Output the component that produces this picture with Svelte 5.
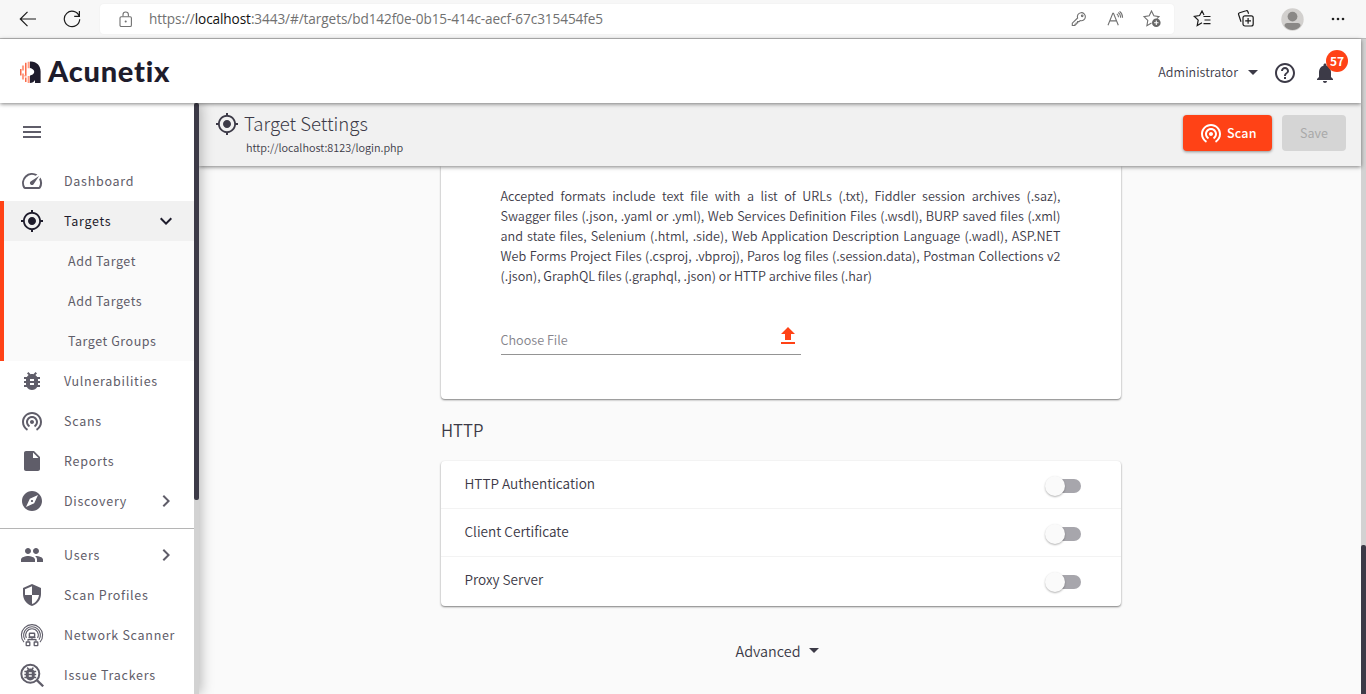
<script>
  const icons = {
    menu: 'M3 18h18v-2H3v2zm0-5h18v-2H3v2zm0-7v2h18V6H3z',
    gauge: 'M20.38 8.57l-1.23 1.85a8 8 0 0 1-.22 7.58H5.07A8 8 0 0 1 15.58 6.85l1.85-1.23A10 10 0 0 0 3.35 19a2 2 0 0 0 1.72 1h13.85a2 2 0 0 0 1.74-1 10 10 0 0 0-.27-10.44zm-9.79 6.84a2 2 0 0 0 2.83 0l5.66-8.49-8.49 5.66a2 2 0 0 0 0 2.83z',
    target: 'M12 8c-2.21 0-4 1.79-4 4s1.79 4 4 4 4-1.79 4-4-1.79-4-4-4zm8.94 3c-.46-4.17-3.77-7.48-7.94-7.94V1h-2v2.06C6.83 3.52 3.52 6.83 3.06 11H1v2h2.06c.46 4.17 3.77 7.48 7.94 7.94V23h2v-2.06c4.17-.46 7.48-3.77 7.94-7.94H23v-2h-2.06zM12 19.2c-3.98 0-7.2-3.22-7.2-7.2s3.22-7.2 7.2-7.2 7.2 3.22 7.2 7.2-3.22 7.2-7.2 7.2z',
    bug: 'M20 8h-2.81c-.45-.78-1.07-1.45-1.82-1.96L17 4.41 15.59 3l-2.17 2.17C12.96 5.06 12.49 5 12 5c-.49 0-.96.06-1.41.17L8.41 3 7 4.41l1.62 1.63C7.88 6.55 7.26 7.22 6.81 8H4v2h2.09c-.05.33-.09.66-.09 1v1H4v2h2v1c0 .34.04.67.09 1H4v2h2.81c1.04 1.79 2.97 3 5.19 3s4.15-1.21 5.19-3H20v-2h-2.09c.05-.33.09-.66.09-1v-1h2v-2h-2v-1c0-.34-.04-.67-.09-1H20V8zm-6 8h-4v-2h4v2zm0-4h-4v-2h4v2z',
    scan: 'M12 11c-1.1 0-2 .9-2 2s.9 2 2 2 2-.9 2-2-.9-2-2-2zm6 2c0-3.31-2.69-6-6-6s-6 2.69-6 6c0 2.22 1.21 4.15 3 5.19l1-1.74c-1.19-.7-2-1.97-2-3.45 0-2.21 1.79-4 4-4s4 1.79 4 4c0 1.48-.81 2.75-2 3.45l1 1.74c1.79-1.04 3-2.97 3-5.19zM12 3C6.48 3 2 7.48 2 13c0 3.7 2.01 6.92 4.99 8.65l1-1.73C5.61 18.53 4 15.96 4 13c0-4.42 3.58-8 8-8s8 3.58 8 8c0 2.96-1.61 5.53-4 6.92l1 1.73c2.99-1.73 5-4.95 5-8.65 0-5.52-4.48-10-10-10z',
    file: 'M6 2c-1.1 0-1.99.9-1.99 2L4 20c0 1.1.89 2 1.99 2H18c1.1 0 2-.9 2-2V8l-6-6H6zm7 7V3.5L18.5 9H13z',
    compass: 'M12 10.9c-.61 0-1.1.49-1.1 1.1s.49 1.1 1.1 1.1c.61 0 1.1-.49 1.1-1.1s-.49-1.1-1.1-1.1zM12 2C6.48 2 2 6.48 2 12s4.48 10 10 10 10-4.48 10-10S17.52 2 12 2zm2.19 12.19L6 18l3.81-8.19L18 6l-3.81 8.19z',
    people: 'M16 11c1.66 0 2.99-1.34 2.99-3S17.66 5 16 5c-1.66 0-3 1.34-3 3s1.34 3 3 3zm-8 0c1.66 0 2.99-1.34 2.99-3S9.66 5 8 5C6.34 5 5 6.34 5 8s1.34 3 3 3zm0 2c-2.33 0-7 1.17-7 3.5V19h14v-2.5c0-2.33-4.67-3.5-7-3.5zm8 0c-.29 0-.62.02-.97.05 1.16.84 1.97 1.97 1.97 3.45V19h6v-2.5c0-2.33-4.67-3.5-7-3.5z',
    shield: 'M12 1L3 5v6c0 5.55 3.84 10.74 9 12 5.16-1.26 9-6.45 9-12V5l-9-4zm0 10.99h7c-.53 4.12-3.28 7.79-7 8.94V12H5V6.3l7-3.11v8.8z',
    down: 'M16.59 8.59L12 13.17 7.41 8.59 6 10l6 6 6-6z',
    right: 'M10 6L8.59 7.41 13.17 12l-4.58 4.59L10 18l6-6z',
    help: 'M11 18h2v-2h-2v2zm1-16C6.48 2 2 6.48 2 12s4.48 10 10 10 10-4.48 10-10S17.52 2 12 2zm0 18c-4.41 0-8-3.59-8-8s3.59-8 8-8 8 3.59 8 8-3.59 8-8 8zm0-14c-2.21 0-4 1.79-4 4h2c0-1.1.9-2 2-2s2 .9 2 2c0 2-3 1.75-3 5h2c0-2.25 3-2.5 3-5 0-2.21-1.79-4-4-4z',
    bell: 'M12 22c1.1 0 2-.9 2-2h-4c0 1.1.89 2 2 2zm6-6v-5c0-3.07-1.64-5.64-4.5-6.32V4c0-.83-.67-1.5-1.5-1.5s-1.5.67-1.5 1.5v.68C7.63 5.36 6 7.92 6 11v5l-2 2v1h16v-1l-2-2z',
    upload: 'M5 20h14v-2H5v2zm0-10h4v6h6v-6h4l-7-7-7 7z'
  };

  const mainNav = [
    { label: 'Dashboard', icon: 'gauge' },
    { label: 'Targets', icon: 'target', arrow: 'down', active: true, children: ['Add Target', 'Add Targets', 'Target Groups'] },
    { label: 'Vulnerabilities', icon: 'bug' },
    { label: 'Scans', icon: 'scan' },
    { label: 'Reports', icon: 'file' },
    { label: 'Discovery', icon: 'compass', arrow: 'right' }
  ];
  const adminNav = [
    { label: 'Users', icon: 'people', arrow: 'right' },
    { label: 'Scan Profiles', icon: 'shield' },
    { label: 'Network Scanner', icon: 'network' },
    { label: 'Issue Trackers', icon: 'tracker' }
  ];
  const httpOptions = ['HTTP Authentication', 'Client Certificate', 'Proxy Server'];
</script>

{#snippet icon(name)}
  {#if name === 'network'}
    <svg class="icon" viewBox="0 0 24 24" fill="none" stroke="currentColor" stroke-width="1.1">
      <path d="M4 19.2A10.6 10.6 0 1 1 20 19.2" />
      <path d="M5 16.8A8.4 8.4 0 1 1 19 16.8" />
      <path d="M6.4 14.9A6.3 6.3 0 1 1 17.6 14.9" />
      <rect x="9.4" y="10.2" width="5.2" height="3.8" rx=".5" stroke-width="1.4" />
      <path d="M12 14v2.8M8 18.5v-1.9h8v1.9M8.5 14.6h7" />
      <rect x="6.2" y="19" width="3.6" height="3.6" rx=".4" stroke-width="1.3" />
      <rect x="14.2" y="19" width="3.6" height="3.6" rx=".4" stroke-width="1.3" />
    </svg>
  {:else if name === 'tracker'}
    <svg class="icon" viewBox="0 0 24 24">
      <circle cx="10.3" cy="10.8" r="9" fill="none" stroke="currentColor" stroke-width="2" />
      <path d="M16.8 17.2l6.4 6.1" stroke="currentColor" stroke-width="2.3" />
      <g transform="translate(1.4 1.9) scale(.74)"><path d={icons.bug} fill="currentColor" /></g>
    </svg>
  {:else}
    <svg class="icon" viewBox="0 0 24 24"><path d={icons[name]} fill="currentColor" /></svg>
  {/if}
{/snippet}

{#snippet navItem(item)}
  <div class="group" class:active={item.active}>
    <a class="nav-row">
      {@render icon(item.icon)}
      <span class="nav-label">{item.label}</span>
      {#if item.arrow}{@render icon(item.arrow)}{/if}
    </a>
    {#each item.children ?? [] as child}
      <a class="sub-row">{child}</a>
    {/each}
  </div>
{/snippet}

<div class="window">
  <div class="toolbar">
    <svg class="back" width="18" height="18" viewBox="0 0 18 18"><path d="M17 9H1.500M8.500 1.800L1.300 9l7.200 7.200" /></svg>
    <svg class="reload" width="18" height="18" viewBox="0 0 18 18"><path d="M16.2 6.2A7.700 7.700 0 1 0 16.700 9.200M16.400 1v5.300h-5.200" /></svg>
    <div class="address">
      <svg class="lock" width="14" height="17" viewBox="0 0 14 17"><rect x="1" y="5.700" width="11.400" height="9.800" rx="1.300" /><path d="M4 5.500V3.700a2.700 2.700 0 0 1 5.400 0v1.800" /><circle cx="6.700" cy="10.500" r=".5" /></svg>
      <span class="url">https://<b>localhost</b>:3443/#/targets/bd142f0e-0b15-414c-aecf-67c315454fe5</span>
      <svg class="key" width="16" height="16" viewBox="0 0 16 16"><path d="M6.600 7A4 4 0 1 1 9.200 9.500L8 10.600H6.600V12H5.200v1.300H4v1.200H1.300v-2.300z" /><circle cx="11.200" cy="4.800" r=".8" /></svg>
      <svg class="read" width="17" height="16" viewBox="0 0 17 16"><path d="M1 14.300L5.800 2.300h.7l4.800 12M2.800 9.900h6.700M9.800 2.900a4 4 0 0 1 1.700 3.300M11.300 1.500a6 6 0 0 1 2.300 5.300M12.600.4a7.600 7.600 0 0 1 2.900 6.400" /></svg>
      <svg class="star" width="20" height="18" viewBox="0 0 20 18"><path d="M9.500 13.100l-4.600 2.600.9-5.300L2 6.600l5.200-.8L9.500 1l2.400 4.800 5.100.8-2.100 2.100" /><circle cx="14.300" cy="12.700" r="4.300" class="plus-bg" /><path d="M14.300 10.500v4.400M12.100 12.700h4.400" class="plus" /></svg>
    </div>
    <svg class="tool t1" width="18" height="18" viewBox="0 0 18 18"><path d="M9 12.800L4.200 15.600l1-5.500L1.300 6.300l5.300-.8L9 1l2 4.100M10.500 6.500h7M11.500 10h6M10.500 13.600h7" /></svg>
    <svg class="tool t2" width="18" height="18" viewBox="0 0 18 18"><rect x="6" y="5.800" width="10.200" height="10.200" rx="2" /><path d="M11.100 8v5.800M8.200 10.900H14M4 11.800L1.600 4.500c-.3-.9.1-1.500 1-1.800l6.500-1.900c.9-.3 1.500.1 1.800.9l.7 2.100" /></svg>
    <svg class="avatar" width="23" height="23" viewBox="0 0 23 23"><circle cx="11.500" cy="11.500" r="11.200" fill="#d2d0ce" /><circle cx="11.500" cy="8.600" r="4.900" fill="#8a8886" /><path d="M3.500 17.900c0-2 1-2.900 2.900-2.900h10.200c1.900 0 2.900.9 2.900 2.900-2 2.600-4.800 4-8 4s-6-1.400-8-4z" fill="#8a8886" /></svg>
    <svg class="dots" width="14" height="4" viewBox="0 0 14 4"><circle cx="2" cy="2" r="1.300" /><circle cx="7" cy="2" r="1.300" /><circle cx="12" cy="2" r="1.300" /></svg>
  </div>

  <div class="page">
    <div class="app">
      <header>
        <svg class="mark" width="22" height="23" viewBox="0 0 22 23">
          <path d="M10 .5h1C16.500.5 20.600 4.800 20.600 10.500V22H15v-3c-1 1.900-2.700 3-5 3v-7.200c.3-.6 4.200-1 4.200-4S10.600 7.400 10 7z" fill="#1e1c2c" />
          <path d="M8.700.7v6.500M8.700 15v7M3 4.500v5M3 12.500v6M5.500 14v1.500" stroke="#ff9c83" stroke-width="2.100" fill="none" />
          <path d="M5.800 1.700v12.500M5.800 16.500v4.500M.8 8v6.500" stroke="#f9532d" stroke-width="1.300" fill="none" />
        </svg>
        <span class="brand">Acunetix</span>
        <span class="user">Administrator</span>
        <span class="caret"></span>
        <span class="help">{@render icon('help')}</span>
        <span class="bell">{@render icon('bell')}<span class="badge">57</span></span>
      </header>

      <div class="body">
        <aside>
          <nav>
            <div class="burger">{@render icon('menu')}</div>
            {#each mainNav as item}{@render navItem(item)}{/each}
            <hr />
            {#each adminNav as item}{@render navItem(item)}{/each}
          </nav>
          <div class="side-scroll"><div class="side-thumb"></div></div>
        </aside>

        <main>
          <div class="titlebar">
            <div class="title">
              {@render icon('target')}
              <div>
                <h1>Target Settings</h1>
                <p>http://localhost:8123/login.php</p>
              </div>
            </div>
            <button class="scan">{@render icon('scan')}<span>Scan</span></button>
            <button class="save">Save</button>
          </div>

          <div class="content">
            <section class="card import">
              <div class="formats">
                <p>Accepted formats include text file with a list of URLs (.txt), Fiddler session archives (.saz),</p>
                <p>Swagger files (.json, .yaml or .yml), Web Services Definition Files (.wsdl), BURP saved files (.xml)</p>
                <p>and state files, Selenium (.html, .side), Web Application Description Language (.wadl), ASP.NET</p>
                <p>Web Forms Project Files (.csproj, .vbproj), Paros log files (.session.data), Postman Collections v2</p>
                <p class="last">(.json), GraphQL files (.graphql, .json) or HTTP archive files (.har)</p>
              </div>
              <div class="file-field"><span>Choose File</span>{@render icon('upload')}</div>
            </section>

            <h2>HTTP</h2>
            <section class="card options">
              {#each httpOptions as option}
                <div class="option">
                  <span>{option}</span>
                  <div class="switch"><div class="knob"></div></div>
                </div>
              {/each}
            </section>

            <div class="advanced"><span>Advanced</span><span class="caret"></span></div>
          </div>
        </main>
      </div>
    </div>
    <div class="page-scroll"><div class="page-thumb"></div></div>
  </div>
</div>

<style>
  :global(body) { margin: 0; overflow: hidden; }
  * { box-sizing: border-box; }
  p, h1, h2 { margin: 0; font-weight: 400; }
  .window { width: 1366px; height: 694px; overflow: hidden; display: flex; flex-direction: column; background: #fafafa; color: #3c3a47; font-family: "Noto Sans CJK SC", "Noto Sans", sans-serif; font-size: 12.5px; white-space: nowrap; }
  .icon { width: 24px; height: 24px; flex: none; display: block; }

  .toolbar { height: 39px; flex: none; background: #f7f7f7; border-bottom: 1px solid #bbb; display: flex; align-items: center; padding: 0 21px 0 19px; }
  .toolbar svg { flex: none; fill: none; stroke: #1b1b1b; stroke-width: 1.2; }
  .reload { margin-left: 26px; }
  .address { width: 1074px; height: 30px; margin-left: 19px; background: #fff; border-radius: 4px; display: flex; align-items: center; padding: 0 12px 0 19px; box-shadow: 0 0 2px rgba(0, 0, 0, .06); }
  .address svg { stroke: #717171; stroke-width: 1.1; }
  .url { margin-left: 16px; flex: 1; font-family: "Open Sans", sans-serif; font-size: 13.6px; line-height: 20px; color: #717171; letter-spacing: -.085px; }
  .url b { font-weight: 400; color: #111; }
  .read { margin-left: 20px; }
  .star { margin-left: 18px; }
  .toolbar .plus-bg { fill: #666; stroke: none; }
  .toolbar .plus { stroke: #fff; }
  .t1 { margin-left: 19px; }
  .t2 { margin-left: 26px; }
  .toolbar .avatar { margin-left: 26px; stroke: none; }
  .toolbar .dots { margin-left: auto; fill: #222; stroke: none; }

  .page { flex: 1; min-height: 0; display: flex; }
  .app { width: 1361px; display: flex; flex-direction: column; }
  .page-scroll { width: 5px; background: #d2d2d2; }
  .page-thumb { height: 149px; margin-top: 506px; background: #3c3a47; border-radius: 2px 2px 0 0; }

  header { height: 64px; flex: none; background: #fff; display: flex; align-items: center; padding: 3px 24px 0 20px; position: relative; z-index: 4; box-shadow: 0 1px 4px rgba(0, 0, 0, .5); }
  .brand { margin: 0 0 3px 6px; font-family: Lato, sans-serif; font-weight: 900; font-size: 29px; line-height: 32px; color: #1e1c2c; letter-spacing: .75px; }
  .user { margin: 0 0 2px auto; font-weight: 350; letter-spacing: .05px; }
  .caret { width: 0; height: 0; border: 5px solid transparent; border-top-color: #3c3a47; border-bottom: 0; margin-left: 10px; }
  .help { margin-left: 15px; }
  .bell { margin-left: 16px; position: relative; }
  .badge { position: absolute; left: 13px; top: -11px; width: 22px; height: 22px; border-radius: 50%; background: #ff4216; color: #fff; font-size: 12px; font-weight: 700; line-height: 21px; text-align: center; }

  .body { flex: 1; min-height: 0; display: flex; }
  aside { width: 199px; flex: none; display: flex; background: #fff; position: relative; z-index: 3; box-shadow: 2px 0 12px rgba(0, 0, 0, .27); color: #5f5d69; }
  nav { width: 194px; overflow: hidden; }
  .burger { height: 58px; padding: 17px 20px; }
  .group { border-left: 4px solid transparent; }
  .nav-row { height: 40px; display: flex; align-items: center; padding: 0 16px; }
  .nav-label { margin: 0 0 2px 20px; flex: 1; font-size: 12.5px; letter-spacing: .72px; }
  .sub-row { height: 40px; display: block; padding-left: 64px; line-height: 40px; letter-spacing: .54px; }
  .active { background: #fafafa; border-color: #ff4216; }
  .active .nav-row { background: #f1f1f1; color: #1e1c2c; }
  hr { margin: 7px 0 6px; border: 0; border-top: 1px solid #b5b5b5; }
  .side-scroll { width: 5px; background: #d2d2d2; }
  .side-thumb { height: 397px; background: #3c3a47; border-radius: 2px; }

  main { flex: 1; display: flex; flex-direction: column; }
  .titlebar { height: 63px; flex: none; background: #f1f1f1; display: flex; align-items: flex-start; padding: 12px 15px 0 16px; position: relative; z-index: 2; box-shadow: 0 1px 4px rgba(0, 0, 0, .5); }
  .title { flex: 1; display: flex; margin-top: -3px; }
  h1 { font-size: 18.6px; line-height: 22px; font-weight: 300; margin-left: 5px; }
  .title p { font-size: 10.850px; font-weight: 350; line-height: 16px; margin: 5px 0 0 7px; }
  button { height: 36px; border: 0; border-radius: 4px; font: 400 12.5px/36px "Noto Sans CJK SC", sans-serif; padding: 0; }
  .scan { width: 89px; background: #ff4216; color: #fff; display: flex; align-items: center; padding-left: 15.5px; gap: 4.5px; font-weight: 500; letter-spacing: .2px; box-shadow: 0 1px 3px rgba(0, 0, 0, .4); }
  .save { width: 64px; margin-left: 10px; background: #d5d5d5; color: #a9a9a9; }

  .content { width: 680px; margin-left: 242px; }
  .card { background: #fff; border-radius: 4px; box-shadow: 0 1px 2px rgba(0, 0, 0, .5); }
  .import { height: 233px; padding: 20px 60.5px 0 59.5px; border-radius: 0 0 4px 4px; }
  .formats p { font-size: 12.65px; font-weight: 350; line-height: 20px; text-align: justify; text-align-last: justify; }
  .formats .last { text-align-last: left; }
  .file-field { width: 300px; height: 33px; margin-top: 36px; border-bottom: 1px solid #949494; display: flex; justify-content: space-between; color: #85848b; font-weight: 350; font-size: 12.65px; line-height: 35px; }
  .file-field .icon { color: #ff4216; margin: 2px .5px 0 0; }
  h2 { font-size: 16.8px; font-weight: 350; line-height: 24px; margin: 19px 0 19px; }
  .options { height: 145px; }
  .option { height: 48px; display: flex; align-items: center; justify-content: space-between; padding: 0 40px 2px 23.5px; font-size: 13.6px; font-weight: 350; border-bottom: 1px solid #f3f3f3; }
  .option:last-child { border-color: transparent; }
  .option span { line-height: 20px; margin-bottom: 1px; }
  .switch { width: 34px; height: 14px; border-radius: 7px; background: #a7a6ac; position: relative; top: 2px; }
  .knob { position: absolute; left: -2px; top: -3px; width: 20px; height: 20px; border-radius: 50%; background: #fafafa; box-shadow: 0 1px 2px rgba(0, 0, 0, .3); }
  .advanced { height: 24px; margin: 32px 8px 0 0; display: flex; align-items: center; justify-content: center; font-size: 14.4px; font-weight: 350; }
  .advanced .caret { margin-left: 8px; }
</style>
